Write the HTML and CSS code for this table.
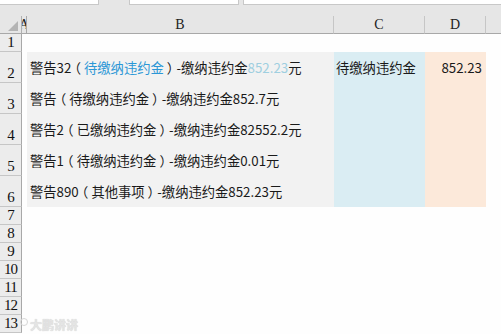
FILE: index.html
```html
<!DOCTYPE html>
<html lang="zh">
<head>
<meta charset="utf-8">
<link rel="stylesheet" href="styles.css">
</head>
<body>
<div class="tabs">
  <div class="tab t1"></div>
  <div class="tab t2"></div>
  <div class="tab t3"></div>
</div>
<div class="sheet">
  <div class="ch corner"><span class="tri"></span></div>
  <div class="ch cola"><span>A</span></div>
  <div class="ch">B</div>
  <div class="ch">C</div>
  <div class="ch">D</div>
  <div class="ch last"></div>

  <div class="rh">1</div><div class="c"></div><div class="c"></div><div class="c"></div><div class="c"></div><div class="c"></div>

  <div class="rh">2</div><div class="c"></div>
  <div class="c b">警告32<span class="p">（</span><span class="blue">待缴纳违约金</span><span class="p">）</span>-缴纳违约金<span class="lblue">852.23</span>元</div>
  <div class="c cc">待缴纳违约金</div>
  <div class="c dd">852.23</div><div class="c"></div>

  <div class="rh">3</div><div class="c"></div>
  <div class="c b">警告<span class="p">（</span>待缴纳违约金<span class="p">）</span>-缴纳违约金852.7元</div>
  <div class="c cc"></div><div class="c dd"></div><div class="c"></div>

  <div class="rh">4</div><div class="c"></div>
  <div class="c b">警告2<span class="p">（</span>已缴纳违约金<span class="p">）</span>-缴纳违约金82552.2元</div>
  <div class="c cc"></div><div class="c dd"></div><div class="c"></div>

  <div class="rh">5</div><div class="c"></div>
  <div class="c b">警告1<span class="p">（</span>待缴纳违约金<span class="p">）</span>-缴纳违约金0.01元</div>
  <div class="c cc"></div><div class="c dd"></div><div class="c"></div>

  <div class="rh">6</div><div class="c"></div>
  <div class="c b">警告890<span class="p">（</span>其他事项<span class="p">）</span>-缴纳违约金852.23元</div>
  <div class="c cc"></div><div class="c dd"></div><div class="c"></div>

  <div class="rh">7</div><div class="c"></div><div class="c"></div><div class="c"></div><div class="c"></div><div class="c"></div>
  <div class="rh">8</div><div class="c"></div><div class="c"></div><div class="c"></div><div class="c"></div><div class="c"></div>
  <div class="rh">9</div><div class="c"></div><div class="c"></div><div class="c"></div><div class="c"></div><div class="c"></div>
  <div class="rh">10</div><div class="c"></div><div class="c"></div><div class="c"></div><div class="c"></div><div class="c"></div>
  <div class="rh">11</div><div class="c"></div><div class="c"></div><div class="c"></div><div class="c"></div><div class="c"></div>
  <div class="rh">12</div><div class="c"></div><div class="c"></div><div class="c"></div><div class="c"></div><div class="c"></div>
  <div class="rh">13</div><div class="c"></div><div class="c"></div><div class="c"></div><div class="c"></div><div class="c"></div>
</div>
<div class="watermark"><span class="wm-icon"></span>大鹏讲讲</div>
</body>
</html>
```
FILE: styles.css
```css
html, body {
  margin: 0;
  padding: 0;
  width: 501px;
  height: 334px;
  overflow: hidden;
  background: #fefefe;
  position: relative;
}
.tabs {
  height: 16px;
  background: #e6e6e6;
  display: flex;
  align-items: flex-start;
}
.tab {
  height: 5px;
  background: #ffffff;
  border: 1px solid #c8c8c8;
  border-top: none;
  box-sizing: border-box;
}
.t1 { width: 100px; margin-left: -1px; }
.t2 { width: 110px; margin-left: 30px; }
.t3 { flex: 1; margin-left: 4px; margin-right: -1px; }

.sheet {
  display: grid;
  grid-template-columns: 22px 5px 307px 91px 61px 1fr;
  grid-template-rows: 18px 18px 31px 31px 31px 31px 31px 18px 18px 18px 18px 18px 18px 18px;
}
.ch {
  background: #e6e6e6;
  border-right: 1px solid #c6c6c6;
  border-bottom: 1px solid #a8a8a8;
  box-sizing: border-box;
  display: flex;
  align-items: center;
  justify-content: center;
  font-family: "Liberation Serif", serif;
  font-size: 14px;
  color: #222;
  padding-top: 1px;
}
.ch.last { border-right: none; }
.corner { position: relative; border-right: 1px solid #b0b0b0; }
.tri {
  position: absolute;
  right: 3px;
  bottom: 2px;
  width: 0;
  height: 0;
  border-left: 10px solid transparent;
  border-bottom: 10px solid #b4b4b4;
}
.cola {
  overflow: hidden;
  border-right: 1px solid #a8a8a8;
}
.rh {
  background: #ececec;
  border-right: 1px solid #a8a8a8;
  border-bottom: 1px solid #c6c6c6;
  box-sizing: border-box;
  display: flex;
  align-items: flex-end;
  justify-content: center;
  font-family: "Liberation Serif", serif;
  font-size: 15px;
  line-height: 15px;
  color: #111;
  padding-bottom: 1px;
  letter-spacing: -1px;
}
.c {
  background: #fefefe;
  box-sizing: border-box;
  display: flex;
  align-items: center;
  font-family: "Noto Sans CJK SC", "Noto Sans", sans-serif;
  font-size: 13.3px;
  color: #1a1a1a;
  white-space: nowrap;
}
.b {
  background: #f2f2f2;
  padding-left: 3px;
}
.cc {
  background: #daedf3;
  padding-left: 2px;
}
.dd {
  background: #fce9da;
  justify-content: flex-end;
  padding-right: 4px;
}
.p {
  font-feature-settings: "halt" 1;
  padding: 0 3px;
}
.blue { color: #2b97d6; }
.lblue { color: #9fcfe0; }
.watermark {
  position: absolute;
  left: 20px;
  top: 316px;
  display: flex;
  align-items: center;
  gap: 2px;
  font-family: "Noto Sans CJK SC", sans-serif;
  font-size: 12px;
  font-weight: bold;
  color: #e4e4e4;
  text-shadow: 0 0 1px #c8c8c8;
}
.wm-icon {
  width: 6px;
  height: 6px;
  border: 1px solid #d6d6d6;
  border-radius: 50%;
  margin-top: -6px;
}
```
